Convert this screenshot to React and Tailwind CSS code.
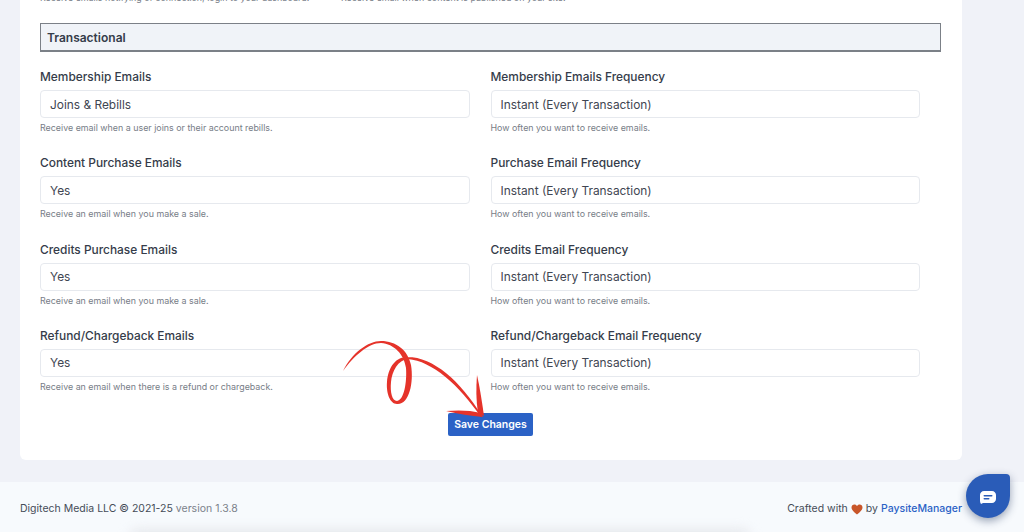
const rows = [
  ['Membership Emails', 'Joins & Rebills', 'Receive email when a user joins or their account rebills.', 'Membership Emails Frequency'],
  ['Content Purchase Emails', 'Yes', 'Receive an email when you make a sale.', 'Purchase Email Frequency'],
  ['Credits Purchase Emails', 'Yes', 'Receive an email when you make a sale.', 'Credits Email Frequency'],
  ['Refund/Chargeback Emails', 'Yes', 'Receive an email when there is a refund or chargeback.', 'Refund/Chargeback Email Frequency'],
];

function Field({ label, value, help }) {
  return (
    <div className="w-[429.5px]">
      <div className="text-[11.9px] leading-[16px] font-medium text-[#353c4a]">{label}</div>
      <div className="mt-[5px] h-[28px] flex items-center px-[9px] pt-[1px] bg-white border border-[#e6e9ee] rounded-[4px] text-[11.9px] text-[#3f4652]">
        {value}
      </div>
      <div className="mt-[4px] text-[8.9px] leading-[12px] text-[#777d87]">{help}</div>
    </div>
  );
}

function Scribble() {
  return (
    <svg className="absolute left-[340px] top-[338px]" width="150" height="84" viewBox="0 0 150 84" fill="#e5332a">
      <path d="M3 33C12 15 28 3 41 3C56 3 68 12 71 27C74 45 69 67 57 66C50 66 46 55 47 44C48 31 54 20 66 19C92 18 120 42 142 78L141 79C119 47 92 23 68 21C58 22 52 33 51 44C50 54 52 63 57 63C64 62 67 44 66 30C64 16 54 6 41 5C28 5 14 18 3 33Z" />
      <path d="M137 37C136 50 136 62 138 75L144 78C142 64 140 50 137 37Z" />
      <path d="M106 73C117 72 130 72 141 75L143 79C131 78 118 76 106 73Z" />
    </svg>
  );
}

export default function App() {
  return (
    <div className="relative h-[532px] overflow-hidden bg-[#f0f2f8] font-['Inter',sans-serif]">
      <div className="mx-5 w-[942px] h-[460px] bg-white rounded-b-[6px] pl-5 overflow-hidden">
        <div className="h-[23px]">
          <div className="-translate-y-[8px] flex text-[8.9px] leading-[12px] text-[#777d87]">
            <div className="w-[301px] whitespace-nowrap">Receive emails notifying of connection, login to your dashboard.</div>
            <div className="whitespace-nowrap">Receive email when content is published on your site.</div>
          </div>
        </div>
        <div className="w-[901px] h-[29px] flex items-center pl-[6px] pt-[1px] bg-[#f0f3f8] border border-[#7b8087] border-b-2 text-[12px] font-semibold text-[#353c4a]">
          Transactional
        </div>
        <div className="mt-[17px] flex flex-col gap-[21.3px]">
          {rows.map(([label, value, help, freq]) => (
            <div key={label} className="flex gap-[21px]">
              <Field label={label} value={value} help={help} />
              <Field label={freq} value="Instant (Every Transaction)" help="How often you want to receive emails." />
            </div>
          ))}
        </div>
        <div className="mt-[20px] ml-[408px] w-[85px] h-[23px] flex items-center justify-center bg-[#2b62c6] rounded-[2px] text-[10.5px] font-semibold text-white">
          Save Changes
        </div>
      </div>

      <div className="mt-[22px] h-[50px] bg-[#f7fafd] px-5 flex items-start pt-[19px] justify-between text-[10.5px] leading-[16px]">
        <div className="text-[#454c58]">
          Digitech Media LLC © 2021-25 <span className="text-[#7b818b]">version 1.3.8</span>
        </div>
        <div className="mr-[42px] flex items-center gap-[3px] text-[#454c58]">
          Crafted with
          <svg width="12" height="11" viewBox="0 0 24 22" fill="#c8562a">
            <path d="M12 21C5 15.500 1 11.500 1 7C1 3.500 3.600 1 6.800 1C9 1 11 2.200 12 4C13 2.200 15 1 17.200 1C20.400 1 23 3.500 23 7C23 11.500 19 15.500 12 21Z" />
          </svg>
          by <span className="font-medium text-[#2b62c6]">PaysiteManager</span>
        </div>
      </div>

      <Scribble />

      <div className="absolute left-[966px] top-[474px] w-[44px] h-[44px] flex items-center justify-center bg-[#2a5cb8] rounded-[22px] rounded-tr-[4px] shadow-[0_3px_8px_rgba(30,50,90,0.45)]">
        <svg width="16" height="13" viewBox="0 0 16 13" className="mt-[2px]">
          <path d="M4 0H12C14.200 0 16 1.800 16 4V8C16 10.200 14.200 12 12 12H3L1 13C0.400 12 0 11 0 10V4C0 1.800 1.800 0 4 0Z" fill="white" />
          <rect x="3.500" y="4" width="9" height="1.500" rx="0.750" fill="#2a5cb8" />
          <rect x="3.500" y="7" width="6" height="1.500" rx="0.750" fill="#2a5cb8" />
        </svg>
      </div>

      <div className="absolute left-[130px] top-[530px] w-[620px] h-[14px] rounded-full bg-[#e4e6ea] blur-[6px]" />
    </div>
  );
}
